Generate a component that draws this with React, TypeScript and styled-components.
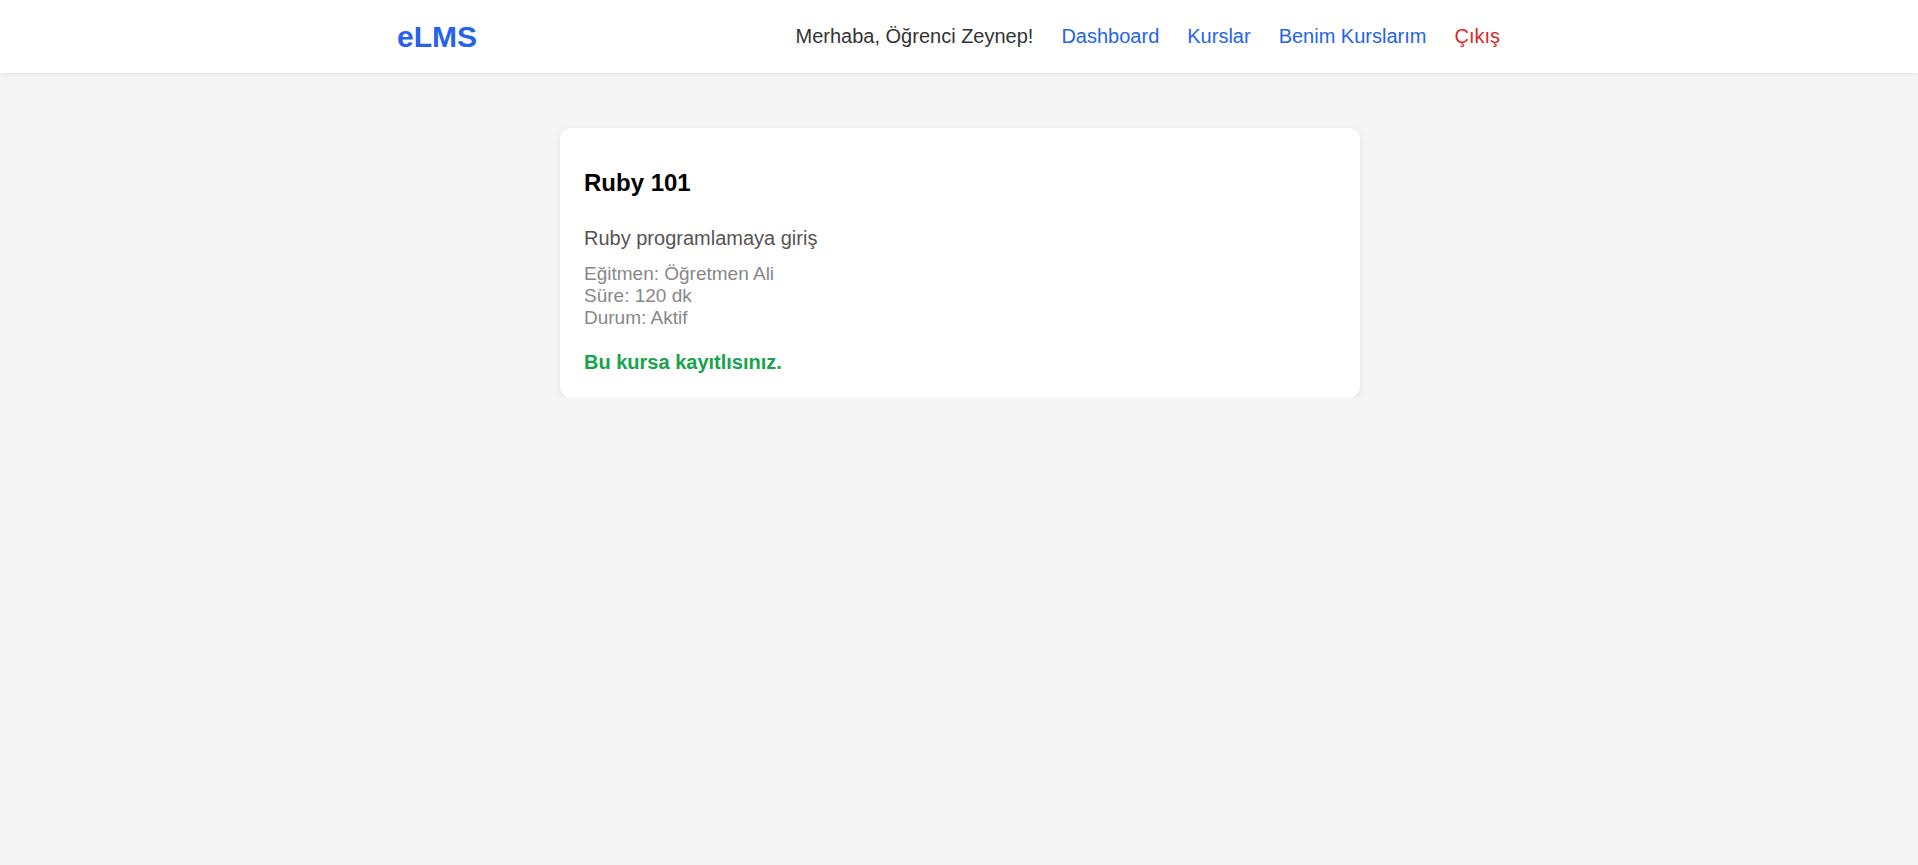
import React from "react";
import styled, { createGlobalStyle } from "styled-components";

const GlobalStyle = createGlobalStyle`
  html, body {
    margin: 0;
    padding: 0;
    background: #f5f5f5;
    font-family: "Liberation Sans", Arial, sans-serif;
  }
  * { box-sizing: border-box; }
`;

const Header = styled.header`
  background: #ffffff;
  height: 73px;
  box-shadow: 0 1px 4px rgba(0, 0, 0, 0.08);
`;

const HeaderInner = styled.div`
  width: 1124px;
  height: 100%;
  margin: 0 auto;
  padding-right: 21px;
  display: flex;
  align-items: center;
  justify-content: space-between;
`;

const Logo = styled.a`
  font-size: 30px;
  font-weight: 700;
  color: #2563eb;
  text-decoration: none;
`;

const Nav = styled.nav`
  display: flex;
  align-items: center;
  gap: 28px;
  font-size: 20px;
`;

const Greeting = styled.span`
  color: #333333;
`;

const NavLink = styled.a<{ $danger?: boolean }>`
  color: ${(p) => (p.$danger ? "#dc2626" : "#2563eb")};
  text-decoration: none;
`;

const Main = styled.main`
  padding-top: 55px;
  padding-left: 2px;
  display: flex;
  justify-content: center;
`;

const Card = styled.div`
  width: 800px;
  background: #ffffff;
  border-radius: 12px;
  box-shadow: 0 2px 8px rgba(0, 0, 0, 0.07);
  padding: 41px 24px 24px;
`;

const Title = styled.h3`
  margin: 0;
  font-size: 24px;
  font-weight: 700;
  color: #000000;
`;

const Description = styled.p`
  margin: 30px 0 0;
  font-size: 20px;
  color: #555555;
`;

const Meta = styled.div`
  margin-top: 13px;
  font-size: 19px;
  color: #888888;
  display: flex;
  flex-direction: column;
`;

const Status = styled.p`
  margin: 22px 0 0;
  font-size: 20px;
  font-weight: 700;
  color: #16a34a;
`;

export default function App() {
  return (
    <>
      <GlobalStyle />
      <Header>
        <HeaderInner>
          <Logo href="#">eLMS</Logo>
          <Nav>
            <Greeting>Merhaba, Öğrenci Zeynep!</Greeting>
            <NavLink href="#">Dashboard</NavLink>
            <NavLink href="#">Kurslar</NavLink>
            <NavLink href="#">Benim Kurslarım</NavLink>
            <NavLink href="#" $danger>
              Çıkış
            </NavLink>
          </Nav>
        </HeaderInner>
      </Header>
      <Main>
        <Card>
          <Title>Ruby 101</Title>
          <Description>Ruby programlamaya giriş</Description>
          <Meta>
            <span>Eğitmen: Öğretmen Ali</span>
            <span>Süre: 120 dk</span>
            <span>Durum: Aktif</span>
          </Meta>
          <Status>Bu kursa kayıtlısınız.</Status>
        </Card>
      </Main>
    </>
  );
}
